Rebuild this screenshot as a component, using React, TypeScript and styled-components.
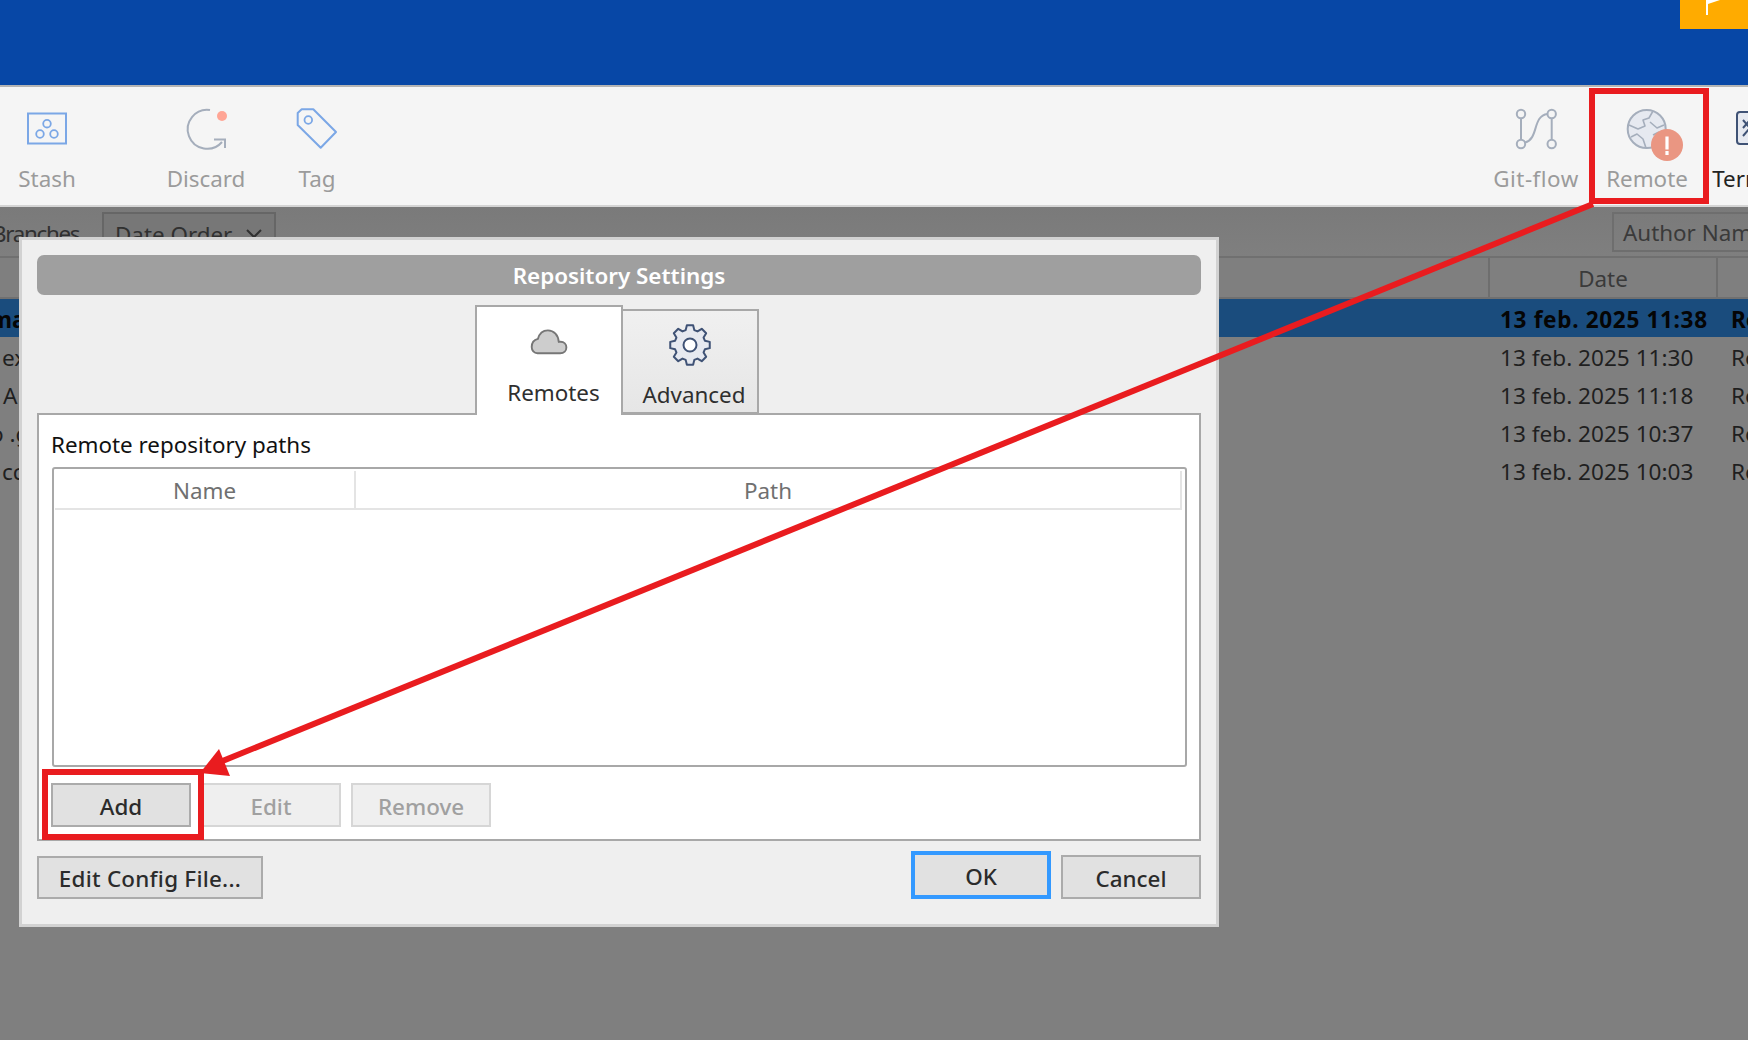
import React from "react";
import styled, { createGlobalStyle } from "styled-components";

const Global = createGlobalStyle`
  html, body { margin: 0; padding: 0; background: #7f7f7f; }
  * { box-sizing: border-box; }
  body { font-family: "Noto Sans", "Open Sans", sans-serif; font-size: 22.4px; }
`;

const Page = styled.div`
  position: relative;
  width: 1748px;
  height: 1040px;
  overflow: hidden;
  background: #7f7f7f;
  display: flex;
  flex-direction: column;
`;

const TopBar = styled.div`
  height: 85px;
  flex: none;
  background: #0747a6;
`;

const FlagBadge = styled.div`
  position: absolute;
  top: 0;
  right: 0;
  width: 68px;
  height: 29px;
  background: #ffab00;
`;

const Toolbar = styled.div`
  height: 122px;
  flex: none;
  display: flex;
  align-items: flex-start;
  background: #f5f5f5;
  border-top: 2px solid #b4b4b4;
  border-bottom: 2px solid #d4d4d4;
  overflow: hidden;
`;

const ToolItem = styled.div<{ $w: number; $ml?: number; $on?: boolean }>`
  flex: none;
  width: ${(p) => p.$w}px;
  margin-left: ${(p) => p.$ml ?? 0}px;
  padding-top: 18px;
  display: flex;
  flex-direction: column;
  align-items: center;
  color: ${(p) => (p.$on ? "#222" : "#9b9b9b")};
  font-size: 22.4px;
  line-height: 30px;
  white-space: nowrap;
`;

const ToolIcon = styled.svg`
  display: block;
  width: 48px;
  height: 48px;
  overflow: visible;
  margin-bottom: 11px;
  fill: none;
`;

const ToolLabel = styled.span<{ $dx?: number; $track?: number }>`
  margin-left: ${(p) => p.$dx ?? 0}px;
  letter-spacing: ${(p) => p.$track ?? 0}px;
`;

const FilterRow = styled.div`
  height: 51px;
  flex: none;
  display: flex;
  align-items: flex-start;
  padding-top: 5px;
  background: linear-gradient(#7a7a7a, #7f7f7f);
  border-bottom: 2px solid #707070;
  color: #303030;
  font-size: 22.4px;
  overflow: hidden;
`;

const BranchesLabel = styled.div`
  width: 102px;
  flex: none;
  line-height: 43px;
  text-indent: -8px;
  letter-spacing: -1.3px;
  white-space: nowrap;
`;

const OrderSelect = styled.div`
  width: 174px;
  height: 46px;
  flex: none;
  display: flex;
  align-items: center;
  justify-content: space-between;
  padding: 0 12px 2px 11px;
  border: 2px solid #666;
  background: #777;
  white-space: nowrap;
`;

const AuthorInput = styled.div`
  width: 200px;
  height: 40px;
  flex: none;
  margin-left: 1336px;
  padding-left: 9px;
  line-height: 38px;
  border: 2px solid #6e6e6e;
  color: #3a3a3a;
  white-space: nowrap;
`;

const HeadRow = styled.div`
  height: 41px;
  flex: none;
  display: flex;
  border-bottom: 2px solid #707070;
  color: #3a3a3a;
  font-size: 22.4px;
`;

const HeadFill = styled.div`
  width: 1488px;
  flex: none;
`;

const HeadDate = styled.div`
  width: 230px;
  flex: none;
  text-align: center;
  line-height: 41px;
  border-left: 2px solid #6e6e6e;
  border-right: 2px solid #6e6e6e;
`;

const LogRow = styled.div<{ $sel?: boolean }>`
  height: 38px;
  flex: none;
  display: flex;
  align-items: center;
  padding-top: 2px;
  background: ${(p) => (p.$sel ? "#1a4c7d" : "transparent")};
  color: ${(p) => (p.$sel ? "#050505" : "#1f1f1f")};
  font-weight: ${(p) => (p.$sel ? 700 : 400)};
  font-size: 22.6px;
  white-space: nowrap;
`;

const LogSubject = styled.div<{ $indent: number }>`
  width: 1500px;
  flex: none;
  text-indent: ${(p) => p.$indent}px;
  overflow: hidden;
`;

const LogDate = styled.div<{ $sel?: boolean }>`
  width: 231px;
  flex: none;
  letter-spacing: ${(p) => (p.$sel ? 0.65 : 0)}px;
`;

const Dialog = styled.div`
  position: absolute;
  left: 19px;
  top: 237px;
  width: 1200px;
  height: 690px;
  padding: 15px;
  display: flex;
  flex-direction: column;
  background: #efefef;
  border: 3px solid #d2d2d2;
  color: #2b2b2b;
`;

const TitleBar = styled.div`
  height: 40px;
  flex: none;
  border-radius: 7px;
  background: #9f9f9f;
  color: #fff;
  font-weight: 600;
  font-size: 22.4px;
  line-height: 42px;
  text-align: center;
`;

const TabStrip = styled.div`
  height: 110px;
  flex: none;
  margin-top: 10px;
  padding-left: 438px;
  display: flex;
  align-items: flex-end;
`;

const Tab = styled.div<{ $active?: boolean }>`
  position: relative;
  z-index: 1;
  display: flex;
  flex-direction: column;
  align-items: center;
  flex: none;
  width: ${(p) => (p.$active ? 148 : 136)}px;
  height: ${(p) => (p.$active ? 110 : 105)}px;
  margin-bottom: ${(p) => (p.$active ? 0 : 1)}px;
  padding-top: ${(p) => (p.$active ? 12 : 10)}px;
  border: 2px solid #a8a8a8;
  border-bottom: ${(p) => (p.$active ? "none" : "2px solid #a8a8a8")};
  border-left: ${(p) => (p.$active ? "2px solid #a8a8a8" : "none")};
  background: ${(p) => (p.$active ? "#fff" : "linear-gradient(#f0f0f0, #e6e6e6)")};
  font-size: 22.4px;
  line-height: 30px;
  color: #2f2f2f;
`;

const TabIcon = styled.svg`
  display: block;
  width: 48px;
  height: 48px;
  fill: none;
`;

const TabLabel = styled.span<{ $dx: number }>`
  margin-left: ${(p) => p.$dx}px;
  margin-top: 11px;
  white-space: nowrap;
`;

const Panel = styled.div`
  height: 428px;
  flex: none;
  margin-top: -2px;
  padding: 15px 12px 0;
  background: #fff;
  border: 2px solid #a8a8a8;
`;

const PanelLabel = styled.div`
  line-height: 30px;
  color: #111;
  font-size: 22.4px;
`;

const PathTable = styled.div`
  height: 300px;
  margin: 7px 0 16px 1px;
  padding: 2px 3px 0 1px;
  border: 2px solid #a8a8a8;
  border-radius: 3px;
`;

const PathHead = styled.div`
  height: 39px;
  display: flex;
  border-right: 2px solid #e4e4e4;
  border-bottom: 2px solid #e4e4e4;
  color: #707070;
  font-size: 22.4px;
  line-height: 40px;
  text-align: center;
`;

const NameCol = styled.div`
  width: 301px;
  flex: none;
  border-right: 2px solid #e4e4e4;
`;

const PathCol = styled.div`
  flex: 1;
`;

const PanelActions = styled.div`
  display: flex;
  gap: 10px;
`;

const Btn = styled.div<{ $w?: number; $h?: number; $off?: boolean; $focus?: boolean; $track?: number }>`
  flex: none;
  width: ${(p) => p.$w ?? 140}px;
  height: ${(p) => p.$h ?? 44}px;
  padding-top: 2px;
  display: flex;
  align-items: center;
  justify-content: center;
  font-size: 22.4px;
  font-weight: 500;
  letter-spacing: ${(p) => p.$track ?? 0}px;
  white-space: nowrap;
  background: ${(p) => (p.$off ? "#efefef" : "#e1e1e1")};
  color: ${(p) => (p.$off ? "#a0a0a0" : "#2b2b2b")};
  border: ${(p) =>
    p.$focus ? "4px solid #3399ff" : p.$off ? "2px solid #d6d6d6" : "2px solid #ababab"};
`;

const Footer = styled.div`
  margin-top: 10px;
  height: 48px;
  flex: none;
  display: flex;
  align-items: flex-end;
  gap: 10px;
`;

const FooterGap = styled.div`
  flex: 1;
`;

const Annotations = styled.svg`
  position: absolute;
  inset: 0;
  width: 1748px;
  height: 1040px;
  pointer-events: none;
`;

const gearPath = (() => {
  const cx = 24, cy = 24, n = 8, ro = 20, ri = 15.5;
  const pts: string[] = [];
  for (let i = 0; i < n; i++) {
    const a = (i * 2 * Math.PI) / n - Math.PI / 2;
    const s = (2 * Math.PI) / n;
    [[-0.36, ri], [-0.2, ro], [0.2, ro], [0.36, ri]].forEach(([k, r]) => {
      const t = a + k * s;
      pts.push(`${(cx + r * Math.cos(t)).toFixed(2)},${(cy + r * Math.sin(t)).toFixed(2)}`);
    });
  }
  return pts.join(" ");
})();

const BLUE = "#7ba7e6";
const GREY = "#a5aebc";
const NAVY = "#3f5275";

const rows = [
  { sub: "main", indent: -10, date: "13 feb. 2025 11:38", sel: true },
  { sub: "ex", indent: 2, date: "13 feb. 2025 11:30" },
  { sub: "A", indent: 3, date: "13 feb. 2025 11:18" },
  { sub: "o .g", indent: -10, date: "13 feb. 2025 10:37" },
  { sub: "cc", indent: 2, date: "13 feb. 2025 10:03" },
];

export default function App() {
  return (
    <Page>
      <Global />
      <TopBar />
      <FlagBadge>
        <svg width="68" height="29" fill="none">
          <path d="M27 0V15" stroke="#fff" strokeWidth="2" />
          <path d="M28 0H40L28 4Z" fill="#fff" />
        </svg>
      </FlagBadge>

      <Toolbar>
        <ToolItem $w={94}>
          <ToolIcon viewBox="0 0 48 48">
            <rect x="5" y="8.5" width="38" height="30" stroke={BLUE} strokeWidth="2" />
            <circle cx="24" cy="18.7" r="3.8" stroke={BLUE} strokeWidth="1.8" />
            <circle cx="17" cy="29" r="3.8" stroke={BLUE} strokeWidth="1.8" />
            <circle cx="31" cy="29" r="3.8" stroke={BLUE} strokeWidth="1.8" />
          </ToolIcon>
          <ToolLabel>Stash</ToolLabel>
        </ToolItem>
        <ToolItem $w={110} $ml={57}>
          <ToolIcon viewBox="0 0 48 48">
            <path d="M28 5A19.5 19.5 0 1 0 40 37" stroke={GREY} strokeWidth="2" />
            <path d="M32 34.5H43V43" stroke={GREY} strokeWidth="2" />
            <circle cx="40" cy="11" r="5" fill="#ffa595" />
          </ToolIcon>
          <ToolLabel>Discard</ToolLabel>
        </ToolItem>
        <ToolItem $w={112}>
          <ToolIcon viewBox="0 0 48 48">
            <path d="M4.7 8L8.7 4.3H20.3L43 27L27.7 42.7L4.7 20Z" stroke={BLUE} strokeWidth="2" strokeLinejoin="round" />
            <circle cx="15.3" cy="15" r="3.8" stroke={BLUE} strokeWidth="1.8" />
          </ToolIcon>
          <ToolLabel>Tag</ToolLabel>
        </ToolItem>
        <ToolItem $w={110} $ml={1108}>
          <ToolIcon viewBox="0 0 48 48">
            <circle cx="9" cy="9" r="4.2" stroke={GREY} strokeWidth="2" />
            <circle cx="39.7" cy="9" r="4.2" stroke={GREY} strokeWidth="2" />
            <circle cx="9" cy="39" r="4.2" stroke={GREY} strokeWidth="2" />
            <circle cx="39.7" cy="39" r="4.2" stroke={GREY} strokeWidth="2" />
            <path d="M9 13.2V34.8M39.7 13.2V34.8" stroke={GREY} strokeWidth="2" />
            <path d="M13 37.5C27 34 20 11 35.5 9" stroke={GREY} strokeWidth="2" />
          </ToolIcon>
          <ToolLabel $track={0.5}>Git-flow</ToolLabel>
        </ToolItem>
        <ToolItem $w={112}>
          <ToolIcon viewBox="0 0 48 48">
            <circle cx="23.7" cy="24" r="19" fill="#e6e9f0" stroke={GREY} strokeWidth="2" />
            <path d="M30 6L26 13L20 15L22 21L15 24L6 20M8 32L14 29L20 34L23 43M27 17L34 23L41 20M30 30L36 27" stroke={GREY} strokeWidth="1.6" strokeLinejoin="round" />
            <circle cx="44" cy="40" r="16" fill="#ea9682" />
            <rect x="42.4" y="31.5" width="3.2" height="13" fill="#fff" />
            <rect x="42.4" y="46" width="3.2" height="4" fill="#fff" />
          </ToolIcon>
          <ToolLabel>Remote</ToolLabel>
        </ToolItem>
        <ToolItem $w={106} $on>
          <ToolIcon viewBox="0 0 48 48">
            <rect x="5" y="7" width="38" height="32" rx="3" fill="#e6e9f0" stroke={NAVY} strokeWidth="2" />
            <path d="M11 15L18 23L11 31M24 31H34M18 15L11 23" stroke={NAVY} strokeWidth="2" />
          </ToolIcon>
          <ToolLabel $dx={4}>Terminal</ToolLabel>
        </ToolItem>
      </Toolbar>

      <FilterRow>
        <BranchesLabel>Branches</BranchesLabel>
        <OrderSelect>
          Date Order
          <svg width="16" height="10" fill="none">
            <path d="M1 1L8 8L15 1" stroke="#303030" strokeWidth="2" />
          </svg>
        </OrderSelect>
        <AuthorInput>Author Name</AuthorInput>
      </FilterRow>

      <HeadRow>
        <HeadFill />
        <HeadDate>Date</HeadDate>
      </HeadRow>

      {rows.map((r) => (
        <LogRow key={r.date} $sel={r.sel}>
          <LogSubject $indent={r.indent}>{r.sub}</LogSubject>
          <LogDate $sel={r.sel}>{r.date}</LogDate>
          <span>Roberto</span>
        </LogRow>
      ))}

      <Dialog>
        <TitleBar>Repository Settings</TitleBar>
        <TabStrip>
          <Tab $active>
            <TabIcon viewBox="0 0 48 48">
              <path d="M12 36H36C40 36 42.5 33.2 42.5 30C42.5 26.5 40 24 36.5 24C36 24 35 24 34.5 24.2C34 17 29.5 12 23 12C17.5 12 14 15.5 12.5 21C8.5 22 6 25.5 6 29.5C6 33 8.5 36 12 36Z" fill="#cdcdcd" stroke="#767676" strokeWidth="2" strokeLinejoin="round" transform="translate(1 0) scale(0.95)" />
            </TabIcon>
            <TabLabel $dx={9}>Remotes</TabLabel>
          </Tab>
          <Tab>
            <TabIcon viewBox="0 0 48 48">
              <polygon points={gearPath} fill="#e6e9f0" stroke={NAVY} strokeWidth="2" strokeLinejoin="round" />
              <circle cx="24" cy="24" r="6.5" fill="#fff" stroke={NAVY} strokeWidth="2" />
            </TabIcon>
            <TabLabel $dx={8}>Advanced</TabLabel>
          </Tab>
        </TabStrip>
        <Panel>
          <PanelLabel>Remote repository paths</PanelLabel>
          <PathTable>
            <PathHead>
              <NameCol>Name</NameCol>
              <PathCol>Path</PathCol>
            </PathHead>
          </PathTable>
          <PanelActions>
            <Btn>Add</Btn>
            <Btn $off>Edit</Btn>
            <Btn $off>Remove</Btn>
          </PanelActions>
        </Panel>
        <Footer>
          <Btn $w={226} $h={43} $track={0.25}>Edit Config File...</Btn>
          <FooterGap />
          <Btn $h={48} $focus>OK</Btn>
          <Btn>Cancel</Btn>
        </Footer>
      </Dialog>

      <Annotations viewBox="0 0 1748 1040" fill="none">
        <rect x="1592" y="91" width="114" height="110" stroke="#e91c1f" strokeWidth="6" />
        <rect x="45" y="772" width="156" height="65" stroke="#e91c1f" strokeWidth="6" />
        <path d="M1593 204L220 762" stroke="#e91c1f" strokeWidth="6" />
        <path d="M200 773L219 749L230 776Z" fill="#e91c1f" />
      </Annotations>
    </Page>
  );
}
